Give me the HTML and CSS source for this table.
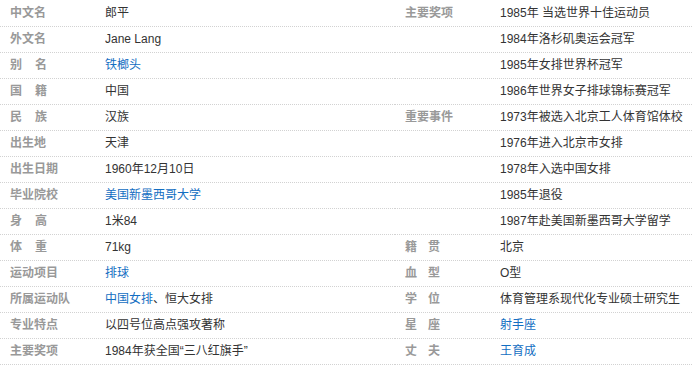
FILE: index.html
```html
<!DOCTYPE html>
<html lang="zh-CN">
<head>
<meta charset="utf-8">
<title>郎平 基本信息</title>
<link rel="stylesheet" href="styles.css">
</head>
<body>
<div class="info">
  <div class="col col-left">
    <div class="row"><span class="label">中文名</span><span class="value">郎平</span></div>
    <div class="row"><span class="label">外文名</span><span class="value">Jane Lang</span></div>
    <div class="row"><span class="label sp">别名</span><span class="value"><a class="link">铁榔头</a></span></div>
    <div class="row"><span class="label sp">国籍</span><span class="value">中国</span></div>
    <div class="row"><span class="label sp">民族</span><span class="value">汉族</span></div>
    <div class="row"><span class="label">出生地</span><span class="value">天津</span></div>
    <div class="row"><span class="label">出生日期</span><span class="value">1960年12月10日</span></div>
    <div class="row"><span class="label">毕业院校</span><span class="value"><a class="link">美国新墨西哥大学</a></span></div>
    <div class="row"><span class="label sp">身高</span><span class="value">1米84</span></div>
    <div class="row"><span class="label sp">体重</span><span class="value">71kg</span></div>
    <div class="row"><span class="label">运动项目</span><span class="value"><a class="link">排球</a></span></div>
    <div class="row"><span class="label">所属运动队</span><span class="value"><a class="link">中国女排</a>、恒大女排</span></div>
    <div class="row"><span class="label">专业特点</span><span class="value">以四号位高点强攻著称</span></div>
    <div class="row"><span class="label">主要奖项</span><span class="value">1984年获全国“三八红旗手”</span></div>
  </div>
  <div class="col col-right">
    <div class="row"><span class="label">主要奖项</span><span class="value">1985年 当选世界十佳运动员</span></div>
    <div class="row"><span class="label"></span><span class="value">1984年洛杉矶奥运会冠军</span></div>
    <div class="row"><span class="label"></span><span class="value">1985年女排世界杯冠军</span></div>
    <div class="row"><span class="label"></span><span class="value">1986年世界女子排球锦标赛冠军</span></div>
    <div class="row"><span class="label">重要事件</span><span class="value">1973年被选入北京工人体育馆体校</span></div>
    <div class="row"><span class="label"></span><span class="value">1976年进入北京市女排</span></div>
    <div class="row"><span class="label"></span><span class="value">1978年入选中国女排</span></div>
    <div class="row"><span class="label"></span><span class="value">1985年退役</span></div>
    <div class="row"><span class="label"></span><span class="value">1987年赴美国新墨西哥大学留学</span></div>
    <div class="row"><span class="label sp">籍贯</span><span class="value">北京</span></div>
    <div class="row"><span class="label sp">血型</span><span class="value">O型</span></div>
    <div class="row"><span class="label sp">学位</span><span class="value">体育管理系现代化专业硕士研究生</span></div>
    <div class="row"><span class="label sp">星座</span><span class="value"><a class="link">射手座</a></span></div>
    <div class="row"><span class="label sp">丈夫</span><span class="value"><a class="link">王育成</a></span></div>
  </div>
</div>
</body>
</html>
```

FILE: styles.css
```css
html, body {
  margin: 0;
  padding: 0;
  background: #fff;
}
body {
  font-family: "Liberation Sans", "Noto Sans CJK SC", sans-serif;
  font-size: 12px;
  color: #333;
}
.info {
  display: grid;
  grid-template-columns: 395px 297px;
  padding-top: 1px;
}
.col {
  display: flex;
  flex-direction: column;
}
.row {
  display: flex;
  height: 25px;
  line-height: 25px;
  border-bottom: 1px dotted #d2d2d2;
  white-space: nowrap;
}
.label {
  flex: 0 0 105px;
  box-sizing: border-box;
  padding-left: 10px;
  color: #999;
  font-weight: 700;
}
.col-left .label.sp {
  letter-spacing: 13px;
}
.col-right .label.sp {
  letter-spacing: 11px;
}
.value {
  flex: 1 1 auto;
  overflow: hidden;
}
.link {
  color: #136ec2;
  text-decoration: none;
}
```
